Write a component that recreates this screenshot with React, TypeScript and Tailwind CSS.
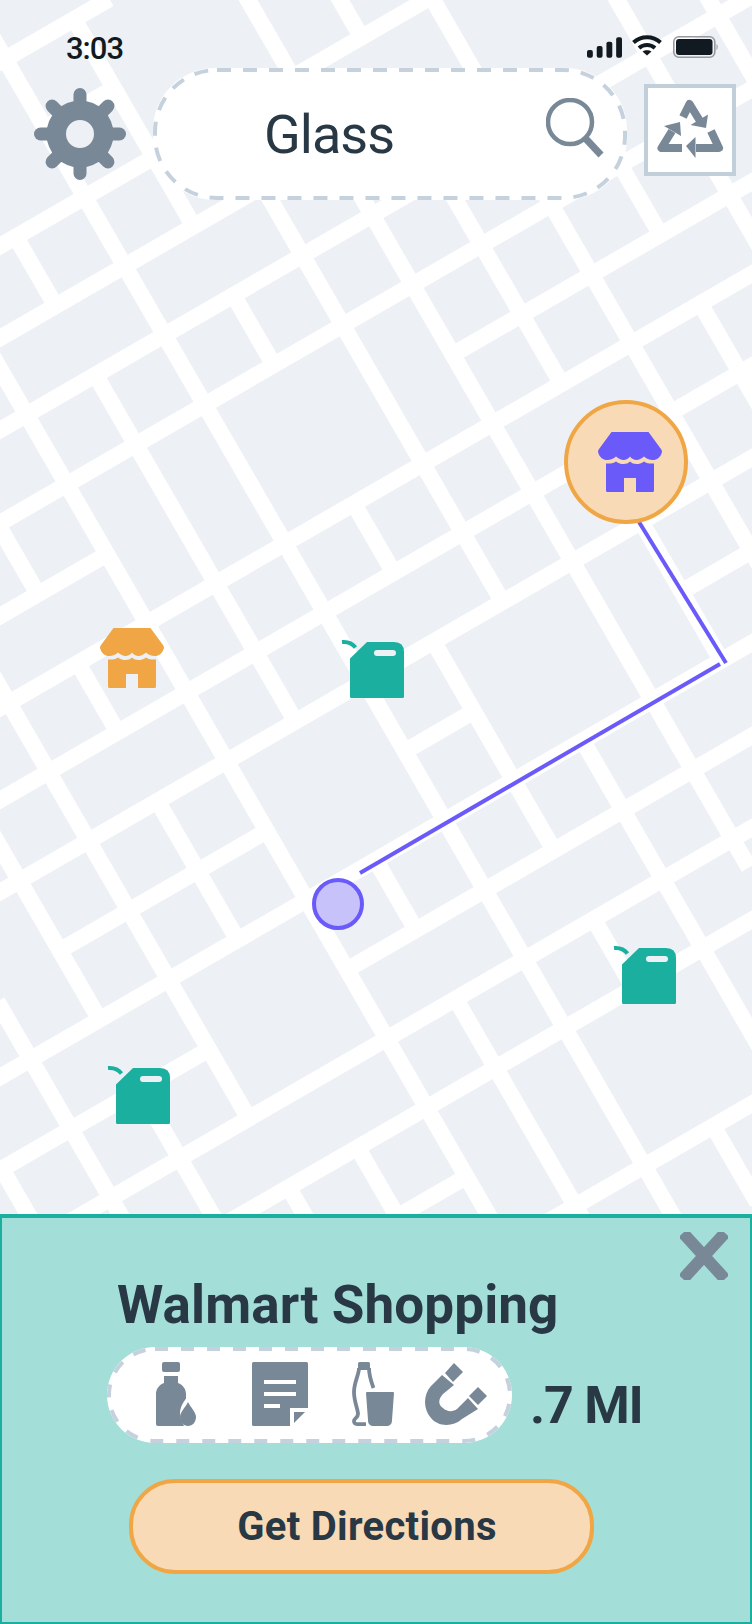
const k = Math.sqrt(3);
const pt = (c: number, d: number): [number, number] => {
  const x = 0.75 * (d + c / k);
  return [x, c - x / k];
};

const neRoads: [number, number, number][] = [
  [62, -60, 110],
  [154, -29, 63],
  [246, -150, 433],
  [338, -200, 340],
  [430, -260, 760],
  [523, -310, 760],
  [616, -370, -213],
  [616, 248, 760],
  [708, -420, 760],
  [800, -470, 760],
  [892, -530, 760],
  [985, -489, -213],
  [985, -29, 63],
  [985, 340, 760],
  [1077, -640, 760],
  [1170, -690, -397],
  [1170, -213, 760],
  [1262, -740, 760],
  [1354, -800, 760],
  [1446, -400, -213],
  [1538, -213, 760],
  [1630, 63, 760],
];

const seRoads: [number, number, number][] = [
  [709, 400, 620],
  [617, 340, 860],
  [525, 523, 616],
  [525, 708, 900],
  [433, 246, 1100],
  [340, 190, 246],
  [340, 430, 708],
  [340, 892, 1077],
  [248, 100, 1300],
  [155, 246, 892],
  [155, 1077, 1500],
  [63, 62, 338],
  [63, 430, 523],
  [63, 708, 800],
  [63, 892, 1170],
  [63, 1262, 1354],
  [63, 1538, 1640],
  [-29, 30, 1640],
  [-121, 246, 338],
  [-121, 430, 892],
  [-121, 1077, 1170],
  [-121, 1262, 1560],
  [-213, 330, 1640],
  [-305, 515, 616],
  [-305, 708, 800],
  [-305, 892, 1077],
  [-305, 1354, 1640],
  [-397, 616, 1262],
  [-397, 1354, 1640],
  [-489, 790, 1077],
  [-489, 1170, 1640],
  [-581, 1000, 1640],
  [-673, 1170, 1640],
];

function RoadMap() {
  return (
    <svg className="absolute inset-0" width={752} height={1624} viewBox="0 0 752 1624">
      <rect width={752} height={1624} fill="#EDF0F5" />
      <g stroke="#FFFFFF" strokeWidth={16.4}>
        {neRoads.map(([c, a, b], i) => {
          const p = pt(c, a);
          const q = pt(c, b);
          return <line key={`n${i}`} x1={p[0]} y1={p[1]} x2={q[0]} y2={q[1]} />;
        })}
        {seRoads.map(([d, a, b], i) => {
          const p = pt(a, d);
          const q = pt(b, d);
          return <line key={`s${i}`} x1={p[0]} y1={p[1]} x2={q[0]} y2={q[1]} />;
        })}
      </g>
      <g stroke="#6A5AF9" strokeWidth={4}>
        <line x1={639} y1={522} x2={726} y2={663} />
        <line x1={360} y1={873} x2={720} y2={664} />
      </g>
    </svg>
  );
}

function StoreIcon({ color }: { color: string }) {
  return (
    <svg width={64} height={60} viewBox="0 0 64 60" fill={color}>
      <path d="M13.500 0H50.500L63.300 17.500Q64.500 19 63.500 21.500C62 25.500 59 28 55 28C51 28 48.500 26.500 46 24.500C43.500 26.500 41 28 38.500 28C36 28 33.500 26.500 32 24.500C30.500 26.500 28 28 25.500 28C23 28 20.500 26.500 18 24.500C15.500 26.500 13 28 9 28C5 28 2 25.500 .5 21.500Q-.5 19 .7 17.500Z" />
      <path d="M8 31.500C11 31.800 15.500 31.500 18 29.500C20.500 31.500 23 32 25.500 32C28 32 30.500 31.200 32 29.500C33.500 31.200 36 32 38.500 32C41 32 43.500 31.500 46 29.500C48.500 31.500 53 31.800 56 31.500V58.500Q56 60 54.500 60H38V46H26V60H9.500Q8 60 8 58.500Z" />
    </svg>
  );
}

function CanIcon() {
  return (
    <svg width={62} height={58} viewBox="-8 -2 62 58" className="overflow-visible">
      <path d="M-8 0C-3 -0.500 2 1 5.500 5.500" fill="none" stroke="#1BAF9F" strokeWidth={4} />
      <path d="M17 0H44Q54 0 54 10V54.500Q54 56 52.500 56H1.500Q0 56 0 54.500V16.500Z" fill="#1BAF9F" />
      <rect x={24} y={8} width={22} height={6} rx={3} fill="#EDF0F5" />
    </svg>
  );
}

function Gear() {
  const teeth = [0, 45, 90, 135, 180, 225, 270, 315];
  return (
    <svg width={92} height={92} viewBox="0 0 92 92" fill="#798897">
      {teeth.map((a) => (
        <rect key={a} x={39.500} y={0} width={13} height={30} rx={6.500} transform={`rotate(${a} 46 46)`} />
      ))}
      <path fillRule="evenodd" d="M46 12.500A33.500 33.500 0 1 1 46 79.500A33.500 33.500 0 1 1 46 12.500ZM46 32A14 14 0 1 0 46 60A14 14 0 1 0 46 32Z" />
    </svg>
  );
}

function SearchGlyph() {
  return (
    <svg width={60} height={60} viewBox="0 0 60 60" fill="none" stroke="#798897">
      <circle cx={24} cy={24} r={22} strokeWidth={4.500} />
      <line x1={40} y1={41} x2={55} y2={57} strokeWidth={7} />
    </svg>
  );
}

function RecycleGlyph() {
  return (
    <svg width={68} height={64} viewBox="656 98 68 64" fill="#798897">
      <g fill="none" stroke="#798897" strokeWidth={8} strokeLinejoin="round">
        <path d="M683 117L689.500 104L700 121" />
        <path d="M672 131L661.500 148L682 148" />
        <path d="M711 131L719 148L696 148" />
      </g>
      <polygon points="708,114.500 706,128 690.500,125" />
      <polygon points="680,122 664,126 681,136" />
      <polygon points="686,146 695.500,137 695.500,158" />
    </svg>
  );
}

function DashedOutline({ w, h, r, dash, gap }: { w: number; h: number; r: number; dash: number; gap: number }) {
  return (
    <svg className="absolute inset-0" width={w} height={h}>
      <rect
        x={2}
        y={2}
        width={w - 4}
        height={h - 4}
        rx={r}
        fill="none"
        stroke="#C5D2DD"
        strokeWidth={4}
        strokeDasharray={`${dash} ${gap}`}
      />
    </svg>
  );
}

function BottleDrop() {
  return (
    <svg width={42} height={64} viewBox="0 0 42 64" fill="#798897">
      <rect x={6} y={0} width={18} height={10} rx={2} />
      <path d="M8 14H22V21C27 23 30 27 30 32V36.500C27 41 24 45 24 52C24 57 26 60 28 64H2Q0 64 0 62V32C0 27 3 23 8 21Z" />
      <path d="M32 40C35 46 40 50 40 55C40 60 36.500 64 32 64C27.500 64 24 60 24 55C24 50 29 46 32 40Z" />
    </svg>
  );
}

function DocGlyph() {
  return (
    <svg width={56} height={64} viewBox="0 0 56 64">
      <path d="M1.500 0H54.500Q56 0 56 1.500V46H38V64H1.500Q0 64 0 62.500V1.500Q0 0 1.500 0Z" fill="#798897" />
      <g fill="#FFFFFF">
        <rect x={12} y={18} width={32} height={4} />
        <rect x={12} y={30} width={32} height={4} />
        <rect x={12} y={42} width={16} height={4} />
      </g>
      <polygon points="42,50 53,50 42,61" fill="#798897" />
    </svg>
  );
}

function BottleGlass() {
  return (
    <svg width={42} height={64} viewBox="0 0 42 64" fill="#798897">
      <path
        d="M7 6C7 13 2 20 2 30C2 40 6 47 6 52C6 56 2 56 2 59C2 62 4 62.200 7 62.200H14M17 6C17 14 19 19 21.500 26"
        fill="none"
        stroke="#798897"
        strokeWidth={3.800}
      />
      <rect x={6} y={0} width={12} height={8} rx={1.500} />
      <path d="M15 30H41Q42 30 42 31L40 58C40 62 38 64 34 64H22C18 64 16 62 16 58L14 31Q14 30 15 30Z" />
    </svg>
  );
}

function MagnetGlyph() {
  return (
    <svg width={62} height={62} viewBox="0 0 62 62" fill="#798897">
      <polygon points="29,0 38,9 28,19 20,10" />
      <polygon points="53,24 62,33 53,42 44,33" />
      <path d="M17 12L29 22L18 31C13 36 13 42 18 45C22 49 28 49 32 46L43 35L53 46L37 56C27 65 12 63 6 55C-2 46 -2 32 6 23Z" />
    </svg>
  );
}

export default function App() {
  return (
    <div className="relative h-[1624px] w-[752px] overflow-hidden flex flex-col text-[#283844] font-['Roboto',sans-serif]">
      <RoadMap />

      <div className="relative h-[68px] flex items-start justify-between pl-[66px] pr-[34px] pt-[30px]">
        <span className="text-[31px] leading-[38px] font-medium text-[#111A21] tracking-[-1px]">3:03</span>
        <div className="flex items-center gap-[10px] h-[22px] mt-[6px]">
          <svg width={35} height={21} viewBox="0 0 36 21" fill="#111A21">
            <rect x={0} y={13} width={6} height={8} rx={2} />
            <rect x={10} y={9} width={6} height={12} rx={2} />
            <rect x={20} y={4.500} width={6} height={16.500} rx={2} />
            <rect x={30} y={0} width={6} height={21} rx={2} />
          </svg>
          <svg width={30} height={21} viewBox="0 0 30 21" fill="none" stroke="#111A21" strokeWidth={4} className="relative top-[-2px]">
            <path d="M1.500 7.500C9 .5 21 .5 28.500 7.500" />
            <path d="M7 13C11.500 9 18.500 9 23 13" />
            <path d="M15 20.500L10.500 16.500C13 14.800 17 14.800 19.500 16.500Z" fill="#111A21" stroke="none" />
          </svg>
          <svg width={45} height={22} viewBox="0 0 45 22" className="ml-[1px]">
            <rect x={0.800} y={0.800} width={41} height={20.400} rx={5} fill="none" stroke="#98989E" strokeWidth={1.600} />
            <rect x={3} y={3} width={36.500} height={16} rx={3} fill="#111A21" />
            <path d="M43.500 8V14C45 13.500 45 8.500 43.500 8Z" fill="#98989E" />
          </svg>
        </div>
      </div>

      <div className="relative flex items-start h-[132px] pl-[34px]">
        <div className="mt-[20px] w-[92px] h-[92px]"><Gear /></div>
        <div className="relative ml-[27px] w-[474px] h-[132px] rounded-[62px] bg-white flex items-center pl-[111px]">
          <DashedOutline w={474} h={132} r={62} dash={14} gap={12} />
          <span className="text-[54px] leading-none font-normal tracking-[-1px] relative top-[1px]">Glass</span>
          <div className="absolute left-[393px] top-[30px]"><SearchGlyph /></div>
        </div>
        <div className="ml-[17px] mt-[16px] w-[92px] h-[92px] bg-white border-4 border-[#C1CFDA] flex items-center justify-center">
          <RecycleGlyph />
        </div>
      </div>

      <div className="relative flex-1">
        <div className="absolute left-[564px] top-[200px] w-[124px] h-[124px] rounded-full bg-[#F8DAB7] border-4 border-[#F0A645] flex items-center justify-center pl-[8px]">
          <StoreIcon color="#6A5AF9" />
        </div>
        <div className="absolute left-[100px] top-[428px]"><StoreIcon color="#F0A645" /></div>
        <div className="absolute left-[342px] top-[440px]"><CanIcon /></div>
        <div className="absolute left-[614px] top-[746px]"><CanIcon /></div>
        <div className="absolute left-[108px] top-[866px]"><CanIcon /></div>
        <div className="absolute left-[312px] top-[678px] w-[52px] h-[52px] rounded-full bg-[#C7C2FA] border-4 border-[#6A5AF9]" />
      </div>

      <div className="relative h-[410px] bg-[#A3DED8] border-t-4 border-x-2 border-b-2 border-[#1BAF9F] flex flex-col">
        <svg className="absolute left-[678px] top-[14px]" width={48} height={48} viewBox="0 0 48 48" stroke="#798897" strokeWidth={12}>
          <line x1={3} y1={1} x2={45} y2={47} />
          <line x1={45} y1={1} x2={3} y2={47} />
        </svg>
        <h1 className="ml-[115px] mt-[56px] text-[53px] leading-[62px] font-bold tracking-[0.1px]">Walmart Shopping</h1>
        <div className="flex mt-[11px] ml-[105px]">
          <div className="relative w-[405px] h-[96px] rounded-[48px] bg-white flex items-center pl-[49px] pb-[2px]">
            <DashedOutline w={405} h={96} r={46} dash={13} gap={13} />
            <div className="relative flex items-center">
              <BottleDrop />
              <div className="ml-[54px]"><DocGlyph /></div>
              <div className="ml-[44px]"><BottleGlass /></div>
              <div className="ml-[31px]"><MagnetGlyph /></div>
            </div>
          </div>
          <span className="self-end mb-[11px] ml-[18px] text-[52px] leading-none font-bold tracking-[-1.2px]">.7 MI</span>
        </div>
        <button className="ml-[127px] mt-[36px] w-[465px] h-[95px] rounded-[46px] bg-[#F8DAB7] border-4 border-[#F0A645] text-[40px] font-bold leading-none tracking-[0.3px] pl-[11px]">
          Get Directions
        </button>
      </div>
    </div>
  );
}
